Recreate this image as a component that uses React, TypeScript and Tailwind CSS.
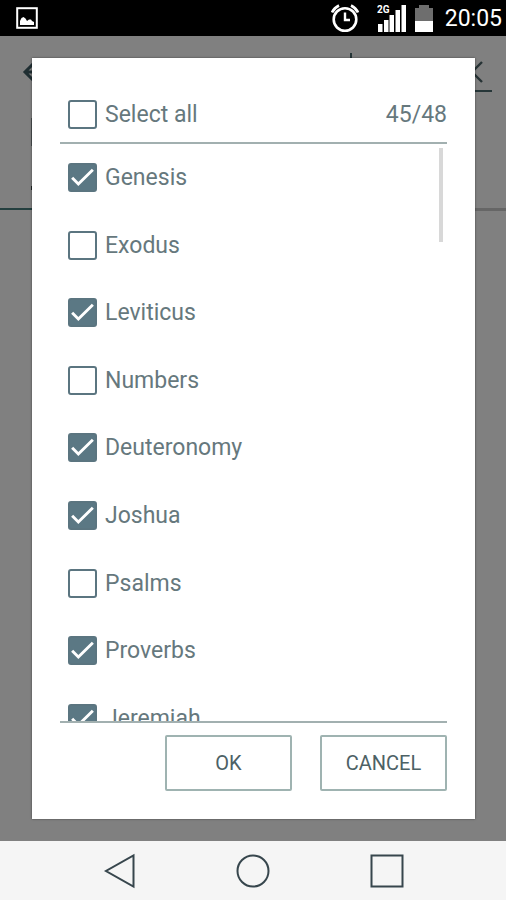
import { useState } from "react";

const books = [
  { name: "Genesis", checked: true },
  { name: "Exodus", checked: false },
  { name: "Leviticus", checked: true },
  { name: "Numbers", checked: false },
  { name: "Deuteronomy", checked: true },
  { name: "Joshua", checked: true },
  { name: "Psalms", checked: false },
  { name: "Proverbs", checked: true },
  { name: "Jeremiah", checked: true },
];

type CheckRowProps = {
  label: string;
  checked: boolean;
  onChange: () => void;
};

function CheckRow({ label, checked, onChange }: CheckRowProps) {
  return (
    <label className="flex items-center gap-2 pl-2 text-[23px] leading-[31px] text-[#66787d]">
      <span className="grid size-[29px] shrink-0">
        <input
          type="checkbox"
          checked={checked}
          onChange={onChange}
          className="col-start-1 row-start-1 size-[29px] appearance-none rounded-[3px] border-2 border-[#5b7580] bg-white checked:bg-[#5b7884]"
        />
        {checked && (
          <svg
            viewBox="0 0 28 28"
            className="pointer-events-none col-start-1 row-start-1 size-[29px]"
            fill="none"
            stroke="white"
            strokeWidth="2.8"
          >
            <path d="M4 14.3l6 6L24 6.500" />
          </svg>
        )}
      </span>
      {label}
    </label>
  );
}

function StatusBar() {
  return (
    <div className="flex h-9 shrink-0 items-center justify-between bg-black pl-4 pr-1 text-white">
      {/* Picture notification */}
      <svg viewBox="0 0 22 22" className="size-[22px]">
        <rect x="1.2" y="1.2" width="19.6" height="19.6" fill="none" stroke="white" strokeWidth="2" />
        <path d="M4 18v-4l1.500-3 2-1 2 1.500 1.500 2.500 2-1.500h2l1 1.500 2 1v3z" fill="white" />
      </svg>

      <div className="flex items-center">
        {/* Alarm */}
        <svg viewBox="0 0 30 30" className="size-[30px]" fill="none" stroke="white">
          <circle cx="14" cy="16.500" r="11.300" strokeWidth="2.600" />
          <path d="M14 9.500v7.500h5" strokeWidth="2.400" />
          <path d="M1 9.500Q3 5 8 2.500M27 9.500Q25 5 20 2.500" strokeWidth="2.600" />
        </svg>

        {/* Signal */}
        <svg viewBox="0 0 30 28" className="ml-4 h-7 w-[30px]" fill="white">
          <text x="0" y="9" fontSize="10" fontWeight="700" fontFamily="Roboto, sans-serif">
            2G
          </text>
          <path d="M1 20h4.500v8H1zM7 16h4.500v12H7zM12.500 11h4.500v17h-4.500zM18.500 6H23v22h-4.500zM24.500 1H29v27h-4.500z" />
        </svg>

        {/* Battery */}
        <svg viewBox="0 0 18 28" className="ml-2 h-7 w-[18px]">
          <path d="M0 4h4V1h10v3h4v13H0z" fill="#6e6e6e" />
          <path d="M0 17h18v11H0z" fill="white" />
        </svg>

        <span className="ml-3 pt-px text-[23px] leading-9">20:05</span>
      </div>
    </div>
  );
}

/* The dimmed search screen behind the dialog */
function SearchScreen() {
  return (
    <div className="flex h-[175px] flex-col justify-between pt-[17px]">
      <div className="flex h-[39px] items-center justify-between pl-[22px] pr-[14px]">
        <svg viewBox="0 0 24 24" className="size-6" fill="none" stroke="#1f2e32" strokeWidth="3">
          <path d="M12 2L3 11l9 9M4 11h18" />
        </svg>
        <div className="flex h-full w-[142px] items-center justify-end border-b-2 border-l-2 border-[#263638] pr-2">
          <svg viewBox="0 0 24 24" className="size-6" fill="none" stroke="#263234" strokeWidth="2.400">
            <path d="M2 2l20 20M22 2L2 22" />
          </svg>
        </div>
      </div>
      <div className="flex h-[104px] flex-col justify-between pb-3 pl-[31px] pt-5">
        <div className="h-7 w-2 bg-[#4a4f50]" />
        <div className="size-1 bg-[#1f2626]" />
      </div>
      <div className="flex">
        <div className="h-[2px] flex-1 bg-[#243f3f]" />
        <div className="h-[3px] flex-1 bg-[#666666]" />
      </div>
    </div>
  );
}

function NavBar() {
  return (
    <nav className="flex h-[59px] shrink-0 items-center justify-center gap-[100px] bg-[#f5f5f5]">
      <button aria-label="Back">
        <svg viewBox="0 0 34 36" className="h-9 w-[34px]" fill="none" stroke="#37464d" strokeWidth="2">
          <path d="M31.500 2.500v31L4 18z" />
        </svg>
      </button>
      <button aria-label="Home">
        <svg viewBox="0 0 34 36" className="h-9 w-[34px]" fill="none" stroke="#37464d" strokeWidth="2">
          <circle cx="17" cy="18" r="15.500" />
        </svg>
      </button>
      <button aria-label="Recent apps">
        <svg viewBox="0 0 34 36" className="h-9 w-[34px]" fill="none" stroke="#37464d" strokeWidth="2">
          <path d="M1.500 2.500h31v31h-31z" />
        </svg>
      </button>
    </nav>
  );
}

function App() {
  const [items, setItems] = useState(books);
  const [all, setAll] = useState(false);

  function toggle(name: string) {
    setItems(items.map((b) => (b.name === name ? { ...b, checked: !b.checked } : b)));
  }

  function toggleAll() {
    setItems(items.map((b) => ({ ...b, checked: !all })));
    setAll(!all);
  }

  return (
    <div className="flex h-screen flex-col font-[Roboto,sans-serif]">
      <StatusBar />

      <main className="relative min-h-0 flex-1 bg-[#808080]">
        <SearchScreen />

        {/* Dialog */}
        <div className="absolute inset-0 flex py-[22px] pl-8 pr-[31px]">
          <div
            role="dialog"
            aria-label="Select books"
            className="flex min-w-0 flex-1 flex-col bg-white p-7 shadow-[0_0_2px_rgba(0,0,0,0.5)]"
          >
            <div className="flex h-[58px] shrink-0 items-center justify-between border-b-2 border-[#a2b0b0]">
              <CheckRow label="Select all" checked={all} onChange={toggleAll} />
              <span className="text-[23px] leading-[31px] text-[#66787d]">45/48</span>
            </div>

            <div className="relative min-h-0 flex-1 overflow-hidden border-b-2 border-[#a2b0b0]">
              <ul className="grid h-[608px] auto-rows-fr">
                {items.map((b) => (
                  <li key={b.name} className="flex items-center">
                    <CheckRow label={b.name} checked={b.checked} onChange={() => toggle(b.name)} />
                  </li>
                ))}
              </ul>
              <div className="absolute right-1 top-1 h-[94px] w-1 bg-[#d8d8d8]" />
            </div>

            <div className="flex shrink-0 justify-end gap-7 pt-3">
              <button className="h-14 w-[127px] rounded-xs border-2 border-[#9fb3b1] text-xl text-[#4d6165]">
                OK
              </button>
              <button className="h-14 w-[127px] rounded-xs border-2 border-[#9fb3b1] text-xl text-[#4d6165]">
                CANCEL
              </button>
            </div>
          </div>
        </div>
      </main>

      <NavBar />
    </div>
  );
}

export default App;
